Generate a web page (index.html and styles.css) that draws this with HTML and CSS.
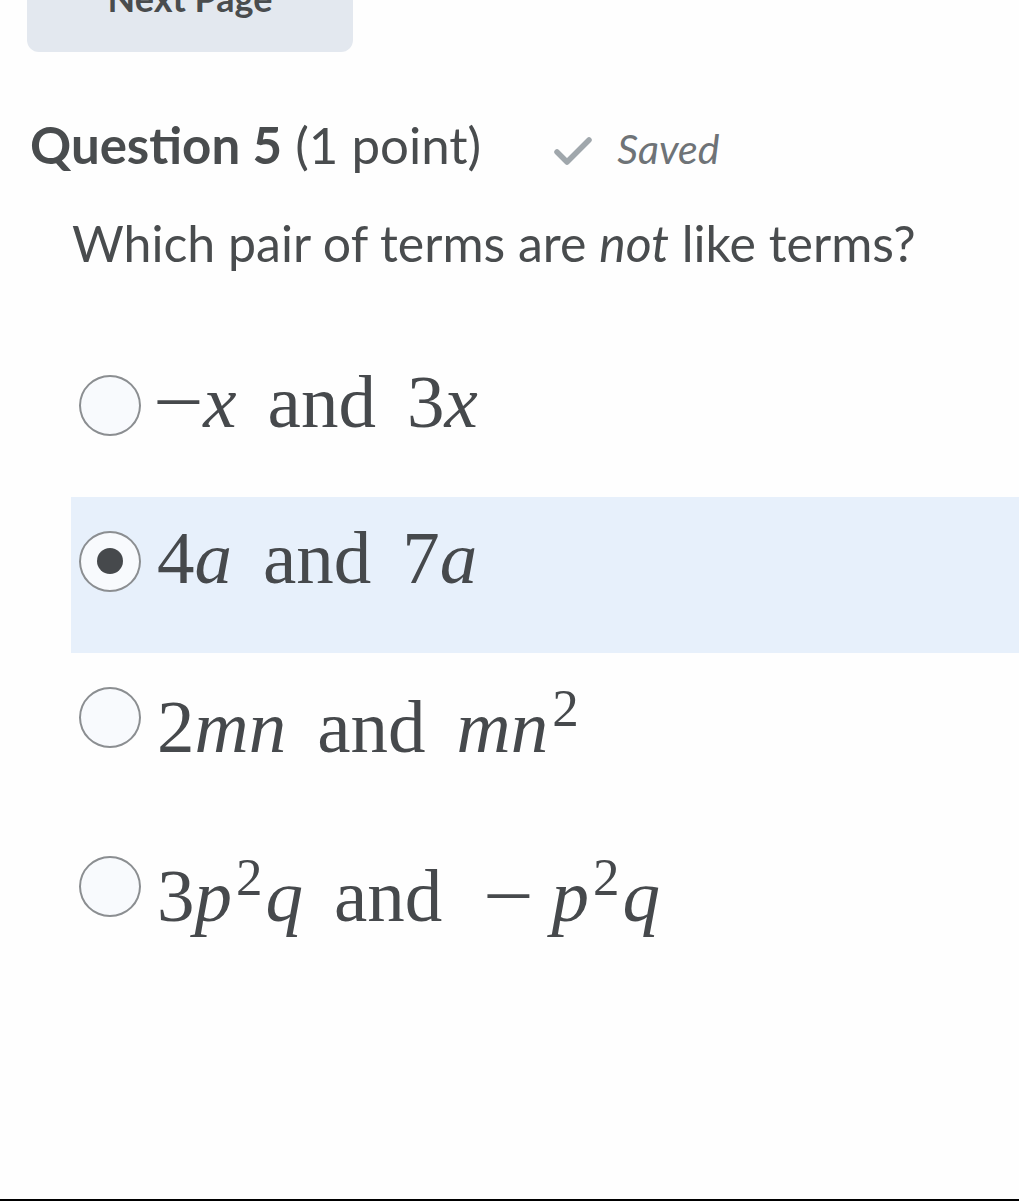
FILE: index.html
```html
<!DOCTYPE html>
<html lang="en">
<head>
<meta charset="utf-8">
<title>Question 5</title>
<link rel="stylesheet" href="styles.css">
</head>
<body>
<div class="page">
  <div class="nav">
    <div class="nav-btn" role="button"><span class="nav-label">Next Page</span></div>
  </div>

  <div class="q-head">
    <h2 class="q-title"><strong>Question 5</strong> (1 point)</h2>
    <span class="saved">
      <svg class="saved-icon" width="40" height="30" viewBox="0 0 40 30" aria-hidden="true">
        <path d="M4 16 L14 26 L36 4" fill="none" stroke="#a0a7ac" stroke-width="5.5" stroke-linecap="round" stroke-linejoin="round"/>
      </svg>
      <span class="saved-text">Saved</span>
    </span>
  </div>

  <p class="q-text">Which pair of terms are <em>not</em> like terms?</p>

  <div class="options">
    <div class="opt">
      <span class="radio"></span>
      <span class="m"><span class="minus">−</span><i>x</i><span class="and">and</span>3<i>x</i></span>
    </div>
    <div class="opt opt-selected">
      <span class="radio radio-on"><span class="dot"></span></span>
      <span class="m">4<i>a</i><span class="and">and</span>7<i>a</i></span>
    </div>
    <div class="opt opt-tall">
      <span class="radio"></span>
      <span class="m">2<i>mn</i><span class="and">and</span><i>mn</i><sup class="sup">2</sup></span>
    </div>
    <div class="opt opt-tall">
      <span class="radio"></span>
      <span class="m">3<i>p</i><sup class="sup">2</sup><i class="after-sup">q</i><span class="and">and</span><span class="minus minus-bin">−</span><i>p</i><sup class="sup">2</sup><i class="after-sup">q</i></span>
    </div>
  </div>
</div>
<div class="bottom-line"></div>
</body>
</html>
```

FILE: styles.css
```css
html, body {
  margin: 0;
  padding: 0;
  background: #fefefe;
}

body {
  font-family: Lato, "Noto Sans", sans-serif;
  color: #494c4e;
}

.page {
  height: 1199px;
  overflow: hidden;
}

.bottom-line {
  height: 2px;
  background: #000;
}

/* Top nav button (cropped at the top edge) */
.nav {
  padding-left: 27px;
  height: 52px;
}

.nav-btn {
  width: 326px;
  height: 52px;
  border-radius: 0 0 12px 12px;
  background: #e3e8ef;
  overflow: hidden;
  font-family: Lato, sans-serif;
  font-weight: 700;
  font-size: 36px;
  line-height: 40px;
  color: #494c4e;
  text-align: center;
}

.nav-label {
  display: block;
  margin-top: -22px;
}

/* Question heading */
.q-head {
  display: flex;
  align-items: baseline;
  margin-top: 62px;
  padding-left: 30px;
}

.q-title {
  margin: 0;
  font-size: 51px;
  line-height: 1.2;
  font-weight: 400;
  color: #494c4e;
}

.q-title strong {
  font-weight: 700;
}

.saved {
  display: inline-flex;
  align-items: baseline;
  margin-left: 72px;
  gap: 24px;
}

.saved-icon {
  align-self: center;
  position: relative;
  top: 2px;
}

.saved-text {
  font-style: italic;
  font-size: 41px;
  color: #6e7377;
}

.q-text {
  margin: 40px 0 0;
  padding-left: 72px;
  font-size: 50px;
  line-height: 1.15;
  color: #494c4e;
}

.q-text em {
  font-style: italic;
}

/* Options */
.options {
  margin-top: 68px;
  margin-left: 71px;
}

.opt {
  display: flex;
  align-items: flex-start;
  gap: 16px;
  box-sizing: border-box;
  height: 156px;
  padding: 34px 0 0 8px;
}

.opt-tall {
  height: 169px;
}

.opt-selected {
  background: #e7f0fb;
}

.radio {
  flex: none;
  box-sizing: border-box;
  width: 62px;
  height: 61px;
  border: 2px solid #8b8e91;
  border-radius: 50%;
  background: #f8fafd;
  display: flex;
  align-items: center;
  justify-content: center;
}

.dot {
  width: 26px;
  height: 26px;
  border-radius: 50%;
  background: #46494c;
}

.m {
  font-family: "Liberation Serif", "Times New Roman", serif;
  font-size: 75px;
  line-height: 75px;
  color: #46494c;
  white-space: nowrap;
  margin-top: -11px;
}

.opt-tall .m {
  margin-top: 2px;
}

.m i {
  font-style: italic;
}

.and {
  margin: 0 31px;
}

.minus {
  display: inline-block;
  transform: scaleX(1.2);
  margin-right: 4px;
}

.minus-bin {
  margin: 0 22px 0 14px;
}

.sup {
  font-size: 53px;
  line-height: 0;
  vertical-align: 26px;
  margin-left: 4px;
}

.after-sup {
  margin-left: 3px;
}
```
